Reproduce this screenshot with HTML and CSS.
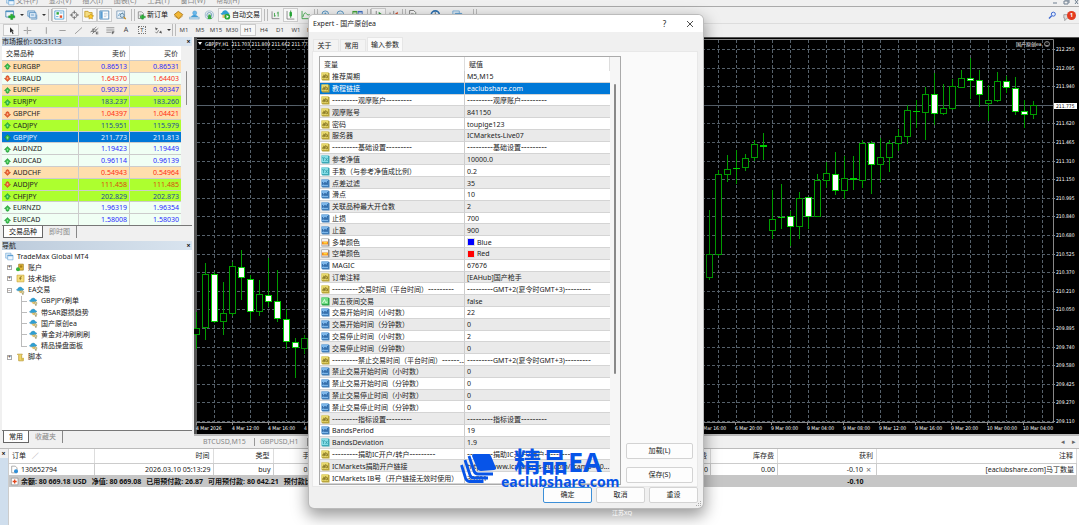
FILE: index.html
```html
<!DOCTYPE html>
<html lang="zh-CN">
<head>
<meta charset="utf-8">
<title>Expert - 国产原创ea</title>
<link rel="stylesheet" href="styles.css">
</head>
<body>
<svg class="defs" aria-hidden="true">
  <symbol id="s" viewBox="0 0 18 18"><path d="M1 1h14l2 2v14H3l-2-2z" fill="#b9a53a"/><path d="M1 1h13v13H1z" fill="#e9da6e"/><path d="M4 6.500h3v5H3.500V9H7M9.500 4v7.500H13v-4H9.500" fill="none" stroke="#7a6a1e" stroke-width="1.500"/></symbol>
  <symbol id="n" viewBox="0 0 18 18"><path d="M1 1h14l2 2v14H3l-2-2z" fill="#3f7db8"/><path d="M1 1h13v13H1z" fill="#7db7ea"/><path d="M3 6v5l2-2v2M7 7h2v4H7zM13 4v7h-2V7" fill="none" stroke="#1f5796" stroke-width="1.500"/></symbol>
  <symbol id="d" viewBox="0 0 18 18"><path d="M1 1h14l2 2v14H3l-2-2z" fill="#3aa7b5"/><path d="M1 1h13v13H1z" fill="#84dde6"/><path d="M3 4l2 4 2-4M5 8v4M9 12l4-6M9 6l4 6" fill="none" stroke="#2e97a5" stroke-width="1.400"/></symbol>
  <symbol id="b" viewBox="0 0 18 18"><path d="M1 1h14l2 2v14H3l-2-2z" fill="#2fa54a"/><path d="M1 1h13v13H1z" fill="#6fdd83"/><path d="M3 12l4-7 2 6 4-1" fill="none" stroke="#e8ffe8" stroke-width="1.800"/></symbol>
  <symbol id="c" viewBox="0 0 18 18"><path d="M1 1h14l2 2v14H1z" fill="#8d8d8d"/><path d="M2 2h12v13H2z" fill="#f4f4f4"/><path d="M2 7h12v6H2z" fill="#f28a1c"/><path d="M5 8h7v3H5z" fill="#ffd83a"/></symbol>
  <symbol id="up" viewBox="0 0 18 18"><path d="M9 1l8 8-4 1v4l-4 3-4-3v-4L1 9z" fill="#2fb944" stroke="#1c7a2a"/><path d="M7 7h4v5H7z" fill="#8ee998"/></symbol>
  <symbol id="dn" viewBox="0 0 18 18"><path d="M9 17l8-8-4-1V4L9 1 5 4v4L1 9z" fill="#ea5a2c" stroke="#a8320f"/><path d="M7 6h4v5H7z" fill="#ffb48a"/></symbol>
  <symbol id="ea" viewBox="0 0 27 24"><path d="M1 10q5-2 6-6 6-5 11 0 1 4 6 4-4 6-12 6-8 0-11-4z" fill="#2f9fd3" stroke="#1c78a8"/><path d="M7 11q5 3 11 0l1 6-7 3z" fill="#e7c06a"/><circle cx="20" cy="17" r="4" fill="#ddd29b" stroke="#8c8050"/><path d="M18 21h5v3h-5z" fill="#8c8050"/></symbol>
  <symbol id="win" viewBox="0 0 27 24"><path d="M2 2h16v15H2z" fill="#dcebf7" stroke="#4c94cd" stroke-width="1.500"/><path d="M8 8h16v14H8z" fill="#eef7ff" stroke="#4c94cd" stroke-width="1.500"/><path d="M8 8h16v3H8z" fill="#4c94cd"/></symbol>
  <symbol id="new" viewBox="0 0 27 24"><path d="M2 2h19v15H2z" fill="#eef5fb" stroke="#3e7fae" stroke-width="2"/><path d="M2 2h19v3H2z" fill="#4b91c2"/><path d="M14 10h5v4h5v5h-5v4h-5v-4h-5v-5h5z" fill="#27b433" stroke="#157a1e"/></symbol>
  <symbol id="prof" viewBox="0 0 27 24"><path d="M2 2h17v13H2z" fill="#d7e7f5" stroke="#5990c0" stroke-width="2"/><path d="M6 6h16v13H6z" fill="#d7e7f5" stroke="#5990c0" stroke-width="2"/><path d="M10 12h7M10 22h14V11" fill="none" stroke="#5990c0" stroke-width="2"/></symbol>
  <symbol id="mw" viewBox="0 0 27 24"><path d="M2 2h22v20H2z" fill="#fff" stroke="#469bd0" stroke-width="2"/><path d="M6 5h6v6H6z" fill="#2fa83c"/><path d="M14 13h6v6h-6z" fill="#e2552b"/><path d="M14 7h7M5 16h6" stroke="#469bd0" stroke-width="2"/></symbol>
  <symbol id="cross" viewBox="0 0 27 24"><circle cx="13" cy="12" r="7" fill="none" stroke="#777" stroke-width="2"/><path d="M13 1v8M13 15v8M2 12h8M16 12h8" stroke="#555" stroke-width="2"/></symbol>
  <symbol id="star" viewBox="0 0 27 24"><path d="M2 3h8l2 3h8v11H2z" fill="#f5dd82" stroke="#c69b22" stroke-width="2"/><path d="M17 9l2 4 5 1-4 3 1 5-4-2-5 2 1-5-3-3 4-1z" fill="#ffc927" stroke="#a57300"/></symbol>
  <symbol id="term" viewBox="0 0 27 24"><path d="M2 2h22v20H2z" fill="#fff" stroke="#4683b5" stroke-width="2"/><path d="M3 3h6v18H3z" fill="#5b9dd1"/><path d="M12 8h9M12 12h9M12 16h6" stroke="#b7cada" stroke-width="2"/></symbol>
  <symbol id="test" viewBox="0 0 27 24"><path d="M2 2h19v18H2z" fill="#eef5fb" stroke="#7c9ab5" stroke-width="2"/><path d="M5 15l4-7 4 5 4-8" fill="none" stroke="#68a2ce" stroke-width="2"/><circle cx="15" cy="13" r="5" fill="#c9e2f3" stroke="#557993" stroke-width="2"/><path d="M19 17l5 5" stroke="#c28c1e" stroke-width="3"/></symbol>
  <symbol id="order" viewBox="0 0 27 24"><path d="M4 1h10l5 5v15H4z" fill="#fff" stroke="#666" stroke-width="2"/><path d="M7 8h7M7 12h7" stroke="#888" stroke-width="2"/><path d="M14 10h5v4h6v5h-6v4h-5v-4H9v-5h5z" fill="#27b433" stroke="#157a1e"/></symbol>
  <symbol id="book" viewBox="0 0 27 24"><path d="M3 11L13 3l11 8-10 10z" fill="#f2b734" stroke="#a67316" stroke-width="2"/><path d="M3 14l11 8 10-8" fill="none" stroke="#c98e1e" stroke-width="2"/></symbol>
  <symbol id="user" viewBox="0 0 27 24"><circle cx="14" cy="7" r="5" fill="#69b9ed" stroke="#2d86c2"/><path d="M4 20q2-9 10-8 8 0 9 8z" fill="#3d9edb"/><path d="M1 17h24v5H1z" fill="#bddcf0" stroke="#6796b5"/></symbol>
  <symbol id="sig" viewBox="0 0 27 24"><circle cx="13" cy="12" r="10" fill="none" stroke="#91b4ca" stroke-width="2"/><circle cx="13" cy="12" r="6" fill="none" stroke="#5b91b8" stroke-width="2"/><path d="M11 11h5l3 11H9z" fill="#35a642"/></symbol>
  <symbol id="auto" viewBox="0 0 27 24"><path d="M1 9q5-2 6-6 6-5 11 0 1 4 6 4-4 6-12 6-8 0-11-4z" fill="#2f9fd3"/><path d="M6 11h13v8H6z" fill="#e7c06a"/><circle cx="18" cy="16" r="7" fill="#28a737"/><path d="M16 12l6 4-6 4z" fill="#fff"/></symbol>
  <symbol id="bar" viewBox="0 0 27 24"><path d="M5 3v18h18" fill="none" stroke="#777" stroke-width="2"/><path d="M11 7v9M11 14h3M20 4v12M17 7h3" stroke="#2c9b38" stroke-width="2"/></symbol>
  <symbol id="can" viewBox="0 0 27 24"><path d="M5 2v20h18" fill="none" stroke="#777" stroke-width="2"/><path d="M14 1v18" stroke="#167c22" stroke-width="2"/><path d="M11 5h6v10h-6z" fill="#22a432"/></symbol>
  <symbol id="lin" viewBox="0 0 27 24"><path d="M5 2v19h19M7 17q4-15 9-8 3 5 8 2" fill="none" stroke="#2c9b38" stroke-width="2"/></symbol>
  <symbol id="scroll" viewBox="0 0 27 24"><path d="M8 2v19h16" fill="none" stroke="#777" stroke-width="2"/><path d="M14 4l8 6-8 6z" fill="#2c9b38"/></symbol>
  <symbol id="shift" viewBox="0 0 27 24"><path d="M5 6v15h18M14 2v19" fill="none" stroke="#777" stroke-width="2"/><path d="M24 4l-8 6 8 6z" fill="#d44f2c"/></symbol>
  <symbol id="zin" viewBox="0 0 27 24"><circle cx="13" cy="10" r="8" fill="#e4f2fb" stroke="#3d81b5" stroke-width="2"/><path d="M9 10h8M13 6v8" stroke="#287bb8" stroke-width="2"/></symbol>
  <symbol id="zout" viewBox="0 0 27 24"><circle cx="13" cy="10" r="8" fill="#e4f2fb" stroke="#3d81b5" stroke-width="2"/><path d="M9 10h8" stroke="#287bb8" stroke-width="2"/></symbol>
  <symbol id="tile" viewBox="0 0 27 24"><path d="M1 2h12v9H1z" fill="#43a336"/><path d="M14 2h12v9H14z" fill="#3f6fc4"/><path d="M1 12h12v9H1z" fill="#3f6fc4"/><path d="M14 12h12v9H14z" fill="#43a336"/><path d="M3 6h8v3H3zM16 6h8v3h-8z" fill="#fff"/></symbol>
  <symbol id="clock" viewBox="0 0 27 24"><circle cx="13" cy="12" r="10" fill="#e8f3fc" stroke="#2c6faf" stroke-width="4"/><path d="M13 5v8h5" fill="none" stroke="#555" stroke-width="2"/></symbol>
</svg>

<nav class="menubar">
  <svg class="i9"><use href="#win"/></svg>
  <span>文件(F)</span><span>显示(V)</span><span>插入(I)</span><span>图表(C)</span><span>工具(T)</span><span>窗口(W)</span><span>帮助(H)</span>
  <svg class="winctl" viewBox="0 0 28 6"><path d="M2 3h4M13 1h4v3h-4zM14 0h4v3M24 0l3 4M27 0l-3 4" fill="none" stroke="#6f7f8f"/></svg>
</nav>

<div class="toolbar top">
  <button class="tb" aria-label="新图表"><svg class="i11"><use href="#new"/></svg></button><i class="caret"></i>
  <button class="tb" aria-label="配置"><svg class="i11"><use href="#prof"/></svg></button><i class="caret"></i><i class="sep"></i>
  <button class="tb on" aria-label="市场报价"><svg class="i11"><use href="#mw"/></svg></button>
  <button class="tb" aria-label="数据窗口"><svg class="i11"><use href="#cross"/></svg></button>
  <button class="tb on" aria-label="导航"><svg class="i11"><use href="#star"/></svg></button>
  <button class="tb on" aria-label="终端"><svg class="i11"><use href="#term"/></svg></button>
  <button class="tb wide" aria-label="测试"><svg class="i11"><use href="#test"/></svg></button><i class="sep"></i>
  <button class="tb text"><svg class="i9"><use href="#order"/></svg>新订单</button>
  <button class="tb mid" aria-label="编辑器"><svg class="i11"><use href="#book"/></svg></button>
  <button class="tb mid" aria-label="社区"><svg class="i11"><use href="#user"/></svg></button>
  <button class="tb" aria-label="信号"><svg class="i11"><use href="#sig"/></svg></button>
  <button class="tb text on auto"><svg class="i11"><use href="#auto"/></svg>自动交易</button><i class="sep"></i>
  <button class="tb" aria-label="柱状图"><svg class="i11"><use href="#bar"/></svg></button>
  <button class="tb on" aria-label="蜡烛图"><svg class="i11"><use href="#can"/></svg></button>
  <button class="tb" aria-label="折线图"><svg class="i11"><use href="#lin"/></svg></button><i class="sep"></i>
  <button class="tb" aria-label="放大"><svg class="i11"><use href="#zin"/></svg></button>
  <button class="tb" aria-label="缩小"><svg class="i11"><use href="#zout"/></svg></button>
  <button class="tb wide" aria-label="平铺"><svg class="i11"><use href="#tile"/></svg></button><i class="sep"></i>
  <button class="tb on" aria-label="自动滚动"><svg class="i11"><use href="#scroll"/></svg></button>
  <button class="tb" aria-label="图表平移"><svg class="i11"><use href="#shift"/></svg></button><i class="sep"></i>
  <button class="tb" aria-label="指标"><svg class="i11"><use href="#order"/></svg></button><i class="caret"></i>
  <button class="tb" aria-label="周期"><svg class="i11"><use href="#clock"/></svg></button><i class="caret"></i>
  <button class="tb" aria-label="模板"><svg class="i11"><use href="#win"/></svg></button><i class="caret"></i><i class="sep"></i>
  <div class="right">
    <svg class="i9" viewBox="0 0 27 24"><circle cx="16" cy="8" r="6" fill="#e6efff" stroke="#3d68cf" stroke-width="3"/><path d="M11 13l-8 8" stroke="#3d68cf" stroke-width="4"/></svg>
    <svg class="chat" viewBox="0 0 14 12"><path d="M1 5h7v4H5l-3 3V9H1z" fill="#ddd" stroke="#999"/></svg><b class="badge">1</b>
  </div>
</div>

<div class="toolbar tools">
  <button class="tk on" aria-label="光标"><svg class="i9" viewBox="0 0 27 24"><path d="M9 2v17l4-4 4 8 3-2-4-7h5z" fill="#333"/></svg></button>
  <button class="tk" aria-label="十字"><svg class="i9" viewBox="0 0 27 24"><path d="M13 1v22M2 12h9M15 12h10" stroke="#777" stroke-width="2"/></svg></button><i class="gap"></i>
  <button class="tk" aria-label="垂直线"><svg class="i9" viewBox="0 0 27 24"><path d="M13 2v20" stroke="#777" stroke-width="2"/></svg></button>
  <button class="tk" aria-label="水平线"><svg class="i9" viewBox="0 0 27 24"><path d="M4 12h19" stroke="#777" stroke-width="2"/></svg></button>
  <button class="tk" aria-label="趋势线"><svg class="i9" viewBox="0 0 27 24"><path d="M3 22L24 3" stroke="#777" stroke-width="2"/></svg></button>
  <button class="tk" aria-label="通道"><svg class="i9" viewBox="0 0 27 24"><path d="M1 17L19 1M6 22L25 5M6 10h15M3 15h15M9 5l2 14" stroke="#666" stroke-width="2"/><path d="M19 17h6M19 22h6M19 17v6" stroke="#333" stroke-width="2"/></svg></button>
  <button class="tk" aria-label="斐波那契"><svg class="i9" viewBox="0 0 27 24"><path d="M1 3h24M1 8h24M1 13h24M1 18h15" stroke="#888" stroke-width="2"/><path d="M19 23v-7h6M19 19h5" fill="none" stroke="#333" stroke-width="2"/></svg></button>
  <button class="tk letter">A</button>
  <button class="tk"><span class="tbox">T</span></button>
  <button class="tk" aria-label="箭头"><svg class="i9" viewBox="0 0 27 24"><path d="M3 3l9 3-6 6zM24 21l-9-3 6-6z" fill="#555"/><path d="M4 16l4 4 6-9" fill="none" stroke="#555" stroke-width="2"/></svg></button><i class="caret"></i><i class="sep"></i>
  <button class="tk">M1</button><button class="tk">M5</button><button class="tk">M15</button><button class="tk">M30</button><button class="tk on">H1</button><button class="tk">H4</button><button class="tk">D1</button><button class="tk">W1</button><button class="tk">MN</button>
</div>

<main class="work">
  <aside class="side">
    <h2 class="ptitle">市场报价: 05:31:13<button aria-label="关闭">×</button></h2>
    <div class="market">
      <table class="quotes">
        <thead><tr><th>交易品种</th><th>卖价</th><th>买价</th></tr></thead>
        <tbody>
          <tr class="peach"><td><svg class="i6"><use href="#up"/></svg>EURGBP</td><td>0.86513</td><td>0.86531</td></tr>
          <tr class="fall"><td><svg class="i6"><use href="#dn"/></svg>EURAUD</td><td>1.64370</td><td>1.64403</td></tr>
          <tr class="peach"><td><svg class="i6"><use href="#up"/></svg>EURCHF</td><td>0.90327</td><td>0.90347</td></tr>
          <tr class="lime"><td><svg class="i6"><use href="#up"/></svg>EURJPY</td><td>183.237</td><td>183.260</td></tr>
          <tr class="peach fall"><td><svg class="i6"><use href="#dn"/></svg>GBPCHF</td><td>1.04397</td><td>1.04421</td></tr>
          <tr class="lime"><td><svg class="i6"><use href="#up"/></svg>CADJPY</td><td>115.951</td><td>115.979</td></tr>
          <tr class="sel"><td><svg class="i6"><use href="#up"/></svg>GBPJPY</td><td>211.773</td><td>211.813</td></tr>
          <tr><td><svg class="i6"><use href="#up"/></svg>AUDNZD</td><td>1.19423</td><td>1.19449</td></tr>
          <tr><td><svg class="i6"><use href="#up"/></svg>AUDCAD</td><td>0.96114</td><td>0.96139</td></tr>
          <tr class="peach fall"><td><svg class="i6"><use href="#dn"/></svg>AUDCHF</td><td>0.54943</td><td>0.54964</td></tr>
          <tr class="lime fall"><td><svg class="i6"><use href="#dn"/></svg>AUDJPY</td><td>111.458</td><td>111.485</td></tr>
          <tr class="lime"><td><svg class="i6"><use href="#up"/></svg>CHFJPY</td><td>202.829</td><td>202.873</td></tr>
          <tr><td><svg class="i6"><use href="#up"/></svg>EURNZD</td><td>1.96319</td><td>1.96354</td></tr>
          <tr><td><svg class="i6"><use href="#up"/></svg>EURCAD</td><td>1.58008</td><td>1.58030</td></tr>
        </tbody>
      </table>
      <i class="thumb"></i>
    </div>
    <div class="ptabs"><button class="on">交易品种</button><button>即时图</button></div>
    <h2 class="ptitle">导航<button aria-label="关闭">×</button></h2>
    <div class="nav">
      <ul class="tree">
        <li><svg class="i9"><use href="#win"/></svg>TradeMax Global MT4</li>
        <li class="l1"><i class="pm">+</i><svg class="i9" viewBox="0 0 27 24"><path d="M8 2h14v18H8z" fill="#e6bd3b" stroke="#94731a" stroke-width="2"/><circle cx="15" cy="9" r="4" fill="#a8801c"/><circle cx="6" cy="17" r="6" fill="#35b13c"/></svg>账户</li>
        <li class="l1"><i class="pm">+</i><svg class="i9" viewBox="0 0 27 24"><path d="M3 2h21v20H3z" fill="#f6df7d" stroke="#c8a336" stroke-width="2"/><path d="M17 6q-4-1-4 4v7M9 11h8" fill="none" stroke="#76590f" stroke-width="2"/></svg>技术指标</li>
        <li class="l1"><i class="pm">−</i><svg class="i9"><use href="#ea"/></svg>EA交易</li>
        <li class="l2"><svg class="i9"><use href="#ea"/></svg>GBPJPY刷单</li>
        <li class="l2"><svg class="i9"><use href="#ea"/></svg>带SAR跟损趋势</li>
        <li class="l2"><svg class="i9"><use href="#ea"/></svg>国产原创ea</li>
        <li class="l2"><svg class="i9"><use href="#ea"/></svg>黄金对冲刷刷刷</li>
        <li class="l2 last"><svg class="i9"><use href="#ea"/></svg>精品操盘面板</li>
        <li class="l1"><i class="pm">+</i><svg class="i9" viewBox="0 0 27 24"><path d="M4 2h15l-2 4v11h5v5H8V6z" fill="#f0d566" stroke="#b2912b" stroke-width="2"/><path d="M16 13h8v6h-8z" fill="#d7bd55"/></svg>脚本</li>
      </ul>
    </div>
    <div class="ptabs end"><button class="on">常用</button><button>收藏夹</button></div>
  </aside>
  <section class="charts">
    <svg id="chart" class="chart" viewBox="194 37 885 397" preserveAspectRatio="xMaxYMin slice" role="img" aria-label="GBPJPY,H1"></svg>
    <div class="ctabs"><span>BTCUSD,M15</span><span>GBPUSD,H1</span><span></span><em>◂</em><em>▸</em></div>
  </section>
</main>

<section class="terminal">
  <div class="strip"><button aria-label="关闭">×</button></div>
  <table class="orders">
    <colgroup><col class="c85"><col class="c119"><col class="c60"><col class="c47"><col><col class="c70"><col class="c67"><col class="c99"><col class="c200"></colgroup>
    <thead><tr><th>订单 <i>∕</i></th><th>时间</th><th>类型</th><th>手数</th><th></th><th>手续费</th><th>库存费</th><th>获利</th><th>注释</th></tr></thead>
    <tbody>
      <tr><td><svg class="i9" viewBox="0 0 27 24"><path d="M5 2h11l5 5v15H5z" fill="#fff" stroke="#888" stroke-width="2"/><circle cx="18" cy="17" r="6" fill="#2f8fd8"/></svg>130652794</td><td>2026.03.10 05:13:29</td><td>buy</td><td>0.01</td><td></td><td>0.00</td><td>0.00</td><td>-0.10<span class="x">×</span></td><td>[eaclubshare.com]马丁数量</td></tr>
      <tr class="sum"><td colspan="7"><svg class="i9" viewBox="0 0 27 24"><path d="M4 2h20v20H4z" fill="#fff" stroke="#888" stroke-width="2"/><path d="M12 6h4v4h4v4h-4v4h-4v-4H8v-4h4z" fill="#e0451c"/></svg><span>余额: 80 669.18 USD</span><span>净值: 80 669.08</span><span>已用预付款: 26.87</span><span>可用预付款: 80 642.21</span><span>预付款比例: 300058.28%</span></td><td>-0.10<span class="x"></span></td><td></td></tr>
    </tbody>
  </table>
  <span class="ghost">江苏XQ</span>
</section>

<section class="dialog" role="dialog" aria-label="Expert - 国产原创ea">
  <header><h1>Expert - 国产原创ea</h1><button>?</button><button aria-label="关闭"><svg viewBox="0 0 6 6"><path d="M0 0l6 6M6 0L0 6" stroke="#222" stroke-width=".8"/></svg></button></header>
  <div class="tabs"><button>关于</button><button>常用</button><button class="on">输入参数</button></div>
  <div class="panel">
    <div class="gridbox">
      <table class="params">
        <thead><tr><th>变量</th><th>赋值</th></tr></thead>
        <tbody>
          <tr><td><svg class="i9"><use href="#s"/></svg>推荐周期</td><td>M5,M15</td></tr>
          <tr class="sel"><td><svg class="i9"><use href="#s"/></svg>教程链接</td><td>eaclubshare.com</td></tr>
          <tr class="head"><td><svg class="i9"><use href="#s"/></svg><p><s>---------</s>观摩账户<s>---------</s></p></td><td><p><s>---------</s>观摩账户<s>---------</s></p></td></tr>
          <tr><td><svg class="i9"><use href="#s"/></svg>观摩账号</td><td>841150</td></tr>
          <tr><td><svg class="i9"><use href="#s"/></svg>密码</td><td>toupige123</td></tr>
          <tr><td><svg class="i9"><use href="#s"/></svg>服务器</td><td>ICMarkets-Live07</td></tr>
          <tr class="head"><td><svg class="i9"><use href="#s"/></svg><p><s>---------</s>基础设置<s>---------</s></p></td><td><p><s>---------</s>基础设置<s>---------</s></p></td></tr>
          <tr><td><svg class="i9"><use href="#d"/></svg>参考净值</td><td>10000.0</td></tr>
          <tr><td><svg class="i9"><use href="#d"/></svg>手数（与参考净值成比例）</td><td>0.2</td></tr>
          <tr><td><svg class="i9"><use href="#n"/></svg>点差过滤</td><td>35</td></tr>
          <tr><td><svg class="i9"><use href="#n"/></svg>滑点</td><td>10</td></tr>
          <tr><td><svg class="i9"><use href="#n"/></svg>关联品种最大开仓数</td><td>2</td></tr>
          <tr><td><svg class="i9"><use href="#n"/></svg>止损</td><td>700</td></tr>
          <tr><td><svg class="i9"><use href="#n"/></svg>止盈</td><td>900</td></tr>
          <tr><td><svg class="i9"><use href="#c"/></svg>多单颜色</td><td><i class="sw blue"></i>Blue</td></tr>
          <tr><td><svg class="i9"><use href="#c"/></svg>空单颜色</td><td><i class="sw red"></i>Red</td></tr>
          <tr><td><svg class="i9"><use href="#n"/></svg>MAGIC</td><td>67676</td></tr>
          <tr><td><svg class="i9"><use href="#s"/></svg>订单注释</td><td>[EAHub]国产枪手</td></tr>
          <tr class="head"><td><svg class="i9"><use href="#s"/></svg><p><s>---------</s>交易时间（平台时间）<s>---------</s></p></td><td><p><s>---------</s>GMT+2(夏令时GMT+3)<s>---------</s></p></td></tr>
          <tr><td><svg class="i9"><use href="#b"/></svg>周五夜间交易</td><td>false</td></tr>
          <tr><td><svg class="i9"><use href="#n"/></svg>交易开始时间（小时数）</td><td>22</td></tr>
          <tr><td><svg class="i9"><use href="#n"/></svg>交易开始时间（分钟数）</td><td>0</td></tr>
          <tr><td><svg class="i9"><use href="#n"/></svg>交易停止时间（小时数）</td><td>2</td></tr>
          <tr><td><svg class="i9"><use href="#n"/></svg>交易停止时间（分钟数）</td><td>0</td></tr>
          <tr class="head"><td><svg class="i9"><use href="#s"/></svg><p><s>---------</s>禁止交易时间（平台时间）<s>------</s>...</p></td><td><p><s>---------</s>GMT+2(夏令时GMT+3)<s>---------</s></p></td></tr>
          <tr><td><svg class="i9"><use href="#n"/></svg>禁止交易开始时间（小时数）</td><td>0</td></tr>
          <tr><td><svg class="i9"><use href="#n"/></svg>禁止交易开始时间（分钟数）</td><td>0</td></tr>
          <tr><td><svg class="i9"><use href="#n"/></svg>禁止交易停止时间（小时数）</td><td>0</td></tr>
          <tr><td><svg class="i9"><use href="#n"/></svg>禁止交易停止时间（分钟数）</td><td>0</td></tr>
          <tr class="head"><td><svg class="i9"><use href="#s"/></svg><p><s>---------</s>指标设置<s>---------</s></p></td><td><p><s>---------</s>指标设置<s>---------</s></p></td></tr>
          <tr><td><svg class="i9"><use href="#n"/></svg>BandsPeriod</td><td>19</td></tr>
          <tr><td><svg class="i9"><use href="#d"/></svg>BandsDeviation</td><td>1.9</td></tr>
          <tr class="head"><td><svg class="i9"><use href="#s"/></svg><p><s>---------</s>捐助IC开户/转户<s>---------</s></p></td><td><p><s>---------</s>捐助IC开户/转户<s>---------</s></p></td></tr>
          <tr><td><svg class="i9"><use href="#s"/></svg>ICMarkets捐助开户链接</td><td>https://www.icmarkets-eu.com/?camp=30...</td></tr>
          <tr><td><svg class="i9"><use href="#s"/></svg>ICMarkets IB号（开户链接无效时使用）</td><td>30781</td></tr>
        </tbody>
      </table>
      <i class="thumb"></i>
    </div>
    <div class="acts"><button>加载(L)</button><button>保存(S)</button></div>
  </div>
  <footer><button class="ok">确定</button><button>取消</button><button>重设</button></footer>
  <svg class="grip" viewBox="0 0 5 5"><path d="M4 0h1v1H4zM2 2h1v1H2zM4 2h1v1H4zM0 4h1v1H0zM2 4h1v1H2zM4 4h1v1H4z" fill="#aaa"/></svg>
</section>

<div class="mark">
  <svg viewBox="0 0 36 30"><path d="M14 1h15q1 0 2 2l5 12q0 2-2 2l-13 1q-3 0-4-3L12 3q0-2 2-2z" fill="#0754e8"/><path d="M9 3l5 15q1 3 4 3h15M5 7l5 15q1 3 4 3h14M1.500 12l4 13q1 3 4 3.500h14" fill="none" stroke="#0754e8" stroke-width="2.800"/></svg>
  <p><strong>精品EA</strong><b>eaclubshare.com</b></p>
</div>
<script src="chart.js"></script>
</body>
</html>
```

FILE: styles.css
```css
* { box-sizing: border-box; }
html, body { height: 100%; }
body {
  margin: 0; display: flex; flex-direction: column; overflow: hidden; position: relative;
  background: #f0f0f0; color: #222;
  font: 7px/10px "Noto Sans", "Noto Sans CJK SC", sans-serif;
}
button { font: inherit; color: inherit; border: 0; background: none; padding: 0; margin: 0; }
table { border-spacing: 0; border-collapse: collapse; }
th { font-weight: normal; }
td, th { padding: 0; white-space: nowrap; }
h1, h2, p, ul { margin: 0; padding: 0; font-size: 7px; font-weight: normal; list-style: none; }
i, em { font-style: normal; }
.defs { position: absolute; width: 0; height: 0; }
.i9 { width: 9px; height: 9px; flex: none; }
.i11 { width: 11px; height: 10px; flex: none; }
.i6 { width: 7px; height: 7px; flex: none; }

.menubar { flex: none; height: 6px; display: flex; align-items: flex-end; gap: 11px; padding-left: 6px; overflow: hidden; color: #888; }
.menubar span { line-height: 10px; }
.menubar .i9 { margin-right: -10px; }
.winctl { width: 28px; height: 6px; margin-left: auto; }

.toolbar { flex: none; display: flex; align-items: center; padding-left: 3px; }
.toolbar.top { height: 18px; border-top: 1px solid #aaa; border-bottom: 1px solid #ddd; }
.toolbar.tools { height: 12px; font-size: 6px; color: #444; }
.tb { width: 15px; height: 14px; display: flex; align-items: center; justify-content: center; flex: none; }
.tb.mid { width: 16px; }
.tb.wide { width: 18px; }
.tb.text { width: auto; padding: 0 2px; gap: 1px; color: #111; }
.tb.auto { margin: 0 1px 0 1px; }
.on { background: #f8f8f8; }
.tb.on, .tk.on { box-shadow: inset 0 0 0 1px #ccc; }
.tk { width: 16px; height: 12px; display: flex; align-items: center; justify-content: center; flex: none; }
.tk.letter { font-size: 7px; }
.tbox { border: 1px dotted #777; line-height: 6px; padding: 0 1px; }
.gap { width: 3px; }
.caret { width: 7px; flex: none; display: flex; justify-content: center; }
.tools .caret { width: 5px; }
.caret::after { content: ""; border: 2px solid transparent; border-top-color: #333; border-bottom: 0; }
.sep { width: 5px; height: 12px; flex: none; display: flex; justify-content: center; }
.sep::after { content: ""; width: 2px; border: 1px solid #bbb; border-width: 0 1px; }
.right { margin-left: auto; padding-right: 3px; display: flex; align-items: center; }
.chat { width: 12px; height: 11px; margin-left: 6px; margin-right: -8px; }
.badge { width: 9px; height: 9px; border-radius: 5px; background: #e33b20; color: #fff; font-size: 6px; line-height: 9px; text-align: center; position: relative; }

.work { flex: 1; min-height: 0; display: flex; padding-top: 1px; }
.side { width: 194px; flex: none; padding: 0 2px; display: flex; flex-direction: column; }
.ptitle { height: 9px; flex: none; display: flex; align-items: center; justify-content: space-between; background: linear-gradient(90deg, #bccbdb, #d9e4ef); line-height: 9px; padding-right: 1px; }
.ptitle button, .strip button { width: 5px; height: 8px; line-height: 7px; font-weight: bold; color: #111; }
.market { height: 180px; flex: none; display: flex; border-bottom: 1px solid #777; }
.quotes { width: 179px; flex: none; display: flex; flex-direction: column; background: #fff; }
.quotes thead { flex: none; }
.quotes tbody { flex: 1; min-height: 0; display: grid; grid-template-rows: repeat(14, 1fr); }
.quotes tr { display: grid; grid-template-columns: 77px 51px 51px; }
.quotes th { height: 14px; line-height: 15px; text-align: right; padding-right: 3px; border-right: 1px solid #ddd; }
.quotes th:first-child { text-align: left; padding-left: 4px; }
.quotes td { display: flex; align-items: center; justify-content: flex-end; padding: 1px 2px 0 0; line-height: 8px; border-right: 1px solid #ccc; border-top: 1px solid #ccc; min-height: 0; color: #2a2aff; }
.quotes td:last-child, .quotes th:last-child { border-right: 0; }
.quotes td:first-child { justify-content: flex-start; gap: 2px; padding-left: 2px; color: #222; }
.quotes tbody tr { background: #f0fff4; }
.quotes tbody .peach { background: #ffdead; }
.quotes tbody .lime { background: #adff2f; }
.quotes .fall td + td { color: #ff2a12; }
.quotes .lime:not(.fall) td + td { color: #234b9c; }
.quotes .lime.fall td + td { color: #d84a10; }
.quotes tbody .sel { background: #0078d7; }
.quotes .sel td, .quotes .sel td:first-child { color: #e8f4ff; }
.thumb { background: #8a8a8a; flex: none; border-radius: 1px; }
.market .thumb { width: 1px; height: 34px; margin: 25px 0 0 5px; }
.ptabs { height: 15px; flex: none; display: flex; align-items: flex-start; color: #888; }
.ptabs.end { height: 17px; }
.ptabs button { height: 12px; line-height: 12px; padding: 0 6px; border-right: 1px solid #888; }
.ptabs .on { background: #fff; border: 1px solid #666; border-top: 0; margin-left: 1px; padding: 0 5px; color: #111; }
.nav { flex: 1; min-height: 0; background: #fff; border-bottom: 1px solid #777; padding-top: 1px; }
.tree { display: grid; grid-template-rows: repeat(10, 1fr); height: 112px; }
.tree li { display: flex; align-items: center; gap: 3px; padding-left: 3px; min-height: 0; }
.tree .l1 { padding-left: 5px; }
.pm { width: 5px; height: 5px; border: 1px solid #aaa; font-size: 5px; line-height: 3px; text-align: center; color: #333; margin-right: 1px; }
.tree .l2 { margin-left: 19px; padding-left: 8px; background: linear-gradient(#bbb, #bbb) left center / 6px 1px no-repeat, linear-gradient(#bbb, #bbb) left top / 1px 100% no-repeat; }
.tree .last { background: linear-gradient(#bbb, #bbb) left center / 6px 1px no-repeat, linear-gradient(#bbb, #bbb) left top / 1px 50% no-repeat; }

.charts { flex: 1; min-width: 0; display: flex; flex-direction: column; }
.chart { display: block; width: 100%; flex: 1; min-height: 0; background: #000; font-family: "DejaVu Sans Condensed", "Noto Sans CJK SC", sans-serif; font-size: 5px; }
.chart text { fill: #fff; }
.chart .grid { stroke: #56616b; stroke-dasharray: 3 2; fill: none; }
.chart .frame { stroke: #888; fill: none; }
.chart .bid { stroke: #56616b; }
.chart .wick { stroke: #009c00; fill: none; }
.chart .hollow { stroke: #009c00; fill: #000; }
.chart .full { stroke: #00d000; fill: #fff; }
.chart .now { fill: #111; }
.ctabs { height: 14px; flex: none; border-top: 2px solid #bbb; display: flex; align-items: center; padding: 0 0 0 4px; color: #888; }
.ctabs span { padding: 0 8px 0 5px; border-right: 1px solid #999; line-height: 8px; }
.ctabs span:nth-child(3) { margin-right: auto; border: 0; }
.ctabs em { width: 11px; text-align: center; color: #666; }

.terminal { flex: none; height: 77px; display: flex; background: #fff; border-top: 1px solid #bbb; position: relative; }
.strip { width: 9px; flex: none; background: linear-gradient(#f0f0f0 9px, #cfdeed 9px); padding-left: 1px; border-right: 1px solid #ccc; }
.orders { width: 100%; table-layout: fixed; align-self: flex-start; margin-right: 2px; }
.c85 { width: 85px; } .c119 { width: 119px; } .c60 { width: 60px; } .c47 { width: 47px; }
.c70 { width: 70px; } .c67 { width: 67px; } .c99 { width: 99px; } .c200 { width: 200px; }
.orders th { height: 14px; text-align: right; padding-right: 3px; border-right: 1px solid #ddd; border-bottom: 1px solid #ccc; }
.orders th:first-child { text-align: left; padding-left: 3px; }
.orders th i { color: #999; padding-left: 4px; }
.orders td { height: 12px; line-height: 11px; text-align: right; padding-right: 2px; border-right: 1px solid #ccc; }
.orders td:first-child { text-align: left; padding-left: 1px; }
.orders td .i9 { vertical-align: middle; margin-right: 2px; }
.orders .sum { background: #c6c6c6; font-weight: bold; color: #111; }
.orders .sum td { border: 0; overflow: hidden; }
.orders .sum td:first-child span { margin-right: 5px; }
.x { display: inline-block; width: 11px; color: #777; font-size: 9px; line-height: 9px; text-align: center; vertical-align: middle; }
.ghost { position: absolute; left: 612px; bottom: 7px; color: #fff; z-index: 3; font-size: 6px; }

.dialog { position: absolute; left: 309px; top: 15px; width: 394px; height: 493px; display: flex; flex-direction: column; background: #f0f0f0; border-radius: 5px; box-shadow: 0 0 0 1px #bbb, 0 6px 16px 2px rgba(0,0,0,.4); z-index: 2; }
.dialog header { height: 17px; flex: none; background: #fff; border-radius: 5px 5px 0 0; display: flex; align-items: center; padding: 0 9px 0 4px; }
.dialog h1 { margin-right: auto; }
.dialog header button { width: 25px; text-align: center; font-size: 8px; }
.dialog header button:last-child { width: 8px; margin-left: 9px; }
.dialog header svg { width: 6px; height: 6px; display: block; margin: auto; }
.tabs { height: 19px; flex: none; display: flex; align-items: flex-end; padding-left: 4px; }
.tabs button { height: 12px; padding: 0 6px 0 3px; margin-right: 1px; background: #f3f3f3; border: 1px solid #e6e6e6; border-bottom: 0; width: 26px; }
.tabs .on { height: 14px; width: 36px; padding: 0; background: #fafafa; }
.panel { flex: 1; min-height: 0; margin: 0 5px 0 3px; padding: 4px 4px 1px 6px; background: #fafafa; border: 1px solid #e8e8e8; display: flex; }
.gridbox { width: 302px; flex: none; display: flex; border: 1px solid #aaa; background: #f6f6f6; min-height: 0; }
.params { width: 290px; flex: none; display: flex; flex-direction: column; background: #fff; }
.params thead { flex: none; }
.params tbody { flex: 1; min-height: 0; display: grid; grid-template-rows: repeat(35, 1fr); }
.params tr { display: grid; grid-template-columns: 145px 1fr; min-height: 0; }
.params th { text-align: left; height: 14px; line-height: 15px; padding-left: 4px; border-right: 1px solid #ddd; }
.params td { display: flex; align-items: center; gap: 2px; padding: 1px 0 0 1px; line-height: 9px; border-right: 1px solid #ccc; border-bottom: 1px solid #d4d4d4; min-height: 0; overflow: hidden; }
.params td:last-child { padding-left: 2px; border-right: 0; }
.params tbody tr:nth-child(even) { background: #eaeaea; }
.params tbody tr.sel { background: #0078d7; color: #fff; }
.params s { text-decoration: none; font: 8px/8px "DejaVu Sans", sans-serif; }
.sw { width: 8px; height: 8px; flex: none; border: 1px solid #ddd; }
.blue { background: #00f; }
.red { background: #f00; }
.gridbox .thumb { width: 2px; height: 290px; margin: 27px 0 0 4px; }
.acts { flex: 1; display: flex; flex-direction: column; justify-content: flex-end; gap: 8px; padding: 0 0 2px 5px; }
.acts button, .dialog footer button { height: 16px; background: #fdfdfd; border: 1px solid #d3d3d3; border-radius: 2px; }
.dialog footer { height: 21px; flex: none; display: flex; justify-content: flex-end; gap: 4px; padding-right: 5px; }
.dialog footer button { width: 49px; }
.dialog footer .ok { border-color: #3c8fd8; }
.grip { position: absolute; right: 2px; bottom: 2px; width: 5px; height: 5px; }

.mark { position: absolute; left: 460px; top: 449px; z-index: 4; display: flex; gap: 5px; color: #0754e8; }
.mark svg { width: 36px; height: 30px; margin-top: 4px; }
.mark strong { display: block; font-size: 27px; line-height: 26px; padding-left: 13px; font-weight: 700; }
.mark b { display: block; font-size: 14px; line-height: 14px; }
```

FILE: chart.js
```js
const svg = document.getElementById('chart');
const out = [];

// Each candle: [x, open/close top, open/close bottom, high, low, filled]
const candles = [
  [196,328,334,312,349,0],[205,274,327,263,340,0],[214,274,321,272,323,1],[223,313,321,282,335,0],
  [232,266,313,262,316,0],[241,267,277,250,300,1],[250,279,311,275,320,1],[259,294,311,280,316,0],
  [268,295,301,258,307,1],[277,301,318,270,322,1],[286,319,341,309,349,1],[295,342,347,338,378,1],
  [304,338,348,335,354,0],[700,248,276,245,280,0],[709,254,277,210,280,0],[718,174,254,170,256,0],
  [727,169,174,155,182,0],[736,168,168,150,184,1],[745,158,167,154,171,0],[754,144,157,140,161,0],
  [763,145,146,133,160,1],[772,219,230,190,239,0],[781,217,217,184,229,1],[790,216,226,211,246,1],
  [799,198,226,192,239,0],[808,197,216,197,229,1],[817,180,216,174,217,0],[826,173,180,162,188,0],
  [835,174,190,152,195,1],[844,178,190,156,199,0],[853,178,179,156,190,1],[862,143,180,140,188,0],
  [871,143,164,141,194,1],[880,157,164,138,182,0],[889,143,157,140,172,0],[898,136,143,129,151,0],
  [907,110,136,105,144,0],[916,111,111,100,128,1],[925,94,112,87,140,0],[934,94,113,73,125,1],
  [943,108,113,84,115,0],[952,86,108,79,110,0],[961,78,87,70,88,0],[970,78,80,58,99,1],
  [979,80,94,70,107,1],[988,100,103,85,121,0],[997,81,100,72,102,0],[1006,81,87,76,93,1],
  [1015,88,111,77,115,1],[1024,111,114,100,128,1],[1033,105,114,101,119,0]
];
const prices = ['212.250','212.095','211.940','','211.620','211.465','211.310','211.150','210.995','210.840',
  '210.680','210.525','210.370','210.210','210.050','209.895','209.740','209.580','209.425','209.270','209.110'];
const times = [[196,'4 Mar 2026'],[232,'4 Mar 12:00'],[268,'4 Mar 16:00'],[304,'4 Mar 20:00'],[699,'6 Mar 16:00'],
  [735,'6 Mar 20:00'],[771,'9 Mar 00:00'],[807,'9 Mar 04:00'],[843,'9 Mar 08:00'],[879,'9 Mar 12:00'],
  [915,'9 Mar 16:00'],[951,'9 Mar 20:00'],[987,'10 Mar 00:00'],[1023,'10 Mar 04:00']];

let grid = '';
for (let x = 214; x < 1053; x += 18) grid += `M${x + .5} 40V421`;
prices.forEach((p, i) => {
  const y = Math.round(49 + i * 18.6);
  grid += `M197 ${y + .5}H1053`;
  out.push(`<path class="frame" d="M1053 ${y + .5}h2"/><text x="1056" y="${y + 2}">${p}</text>`);
});
out.unshift(`<path class="grid" d="${grid}"/><path class="bid" d="M197 105.5H1053"/>`);
out.push('<path class="frame" d="M197 39.5H1053.500V422M196 422.500H1054"/>');
out.push('<path d="M194 37h885v1H194zM194 37h3v397h-3z" fill="#555"/>');
for (const [x, a, b, hi, lo, full] of candles) {
  out.push(`<path class="wick" d="M${x + .5} ${hi}V${lo}"/><rect class="${full ? 'full' : 'hollow'}" x="${x - 2.5}" y="${a + .5}" width="6" height="${b - a}"/>`);
  if (b === a) out.push(`<path d="M${x - 3} ${a + .5}h7" stroke="#00d000"/>`);
}
for (const [x, t] of times) {
  out.push(`<path class="frame" d="M${x + .5} 422v3"/><text x="${x}" y="430">${t}</text>`);
}
out.push('<path d="M198 42h4l-2 3z" fill="#fff"/><text x="205" y="46">GBPJPY,H1&#160; 211.703 211.809 211.662 211.773</text>');
out.push('<text x="1016" y="46">国产原创ea</text><circle cx="1047" cy="44" r="2.500" fill="none" stroke="#ddd" stroke-width=".6"/><path d="M1045.500 45q1.500 1.500 3 0M1046 43h.5M1047.500 43h.5" fill="none" stroke="#ddd" stroke-width=".6"/>');
out.push('<rect x="1054" y="103" width="23" height="6" fill="#fff"/><text class="now" x="1056" y="108">211.775</text>');
svg.innerHTML = out.join('');
```
